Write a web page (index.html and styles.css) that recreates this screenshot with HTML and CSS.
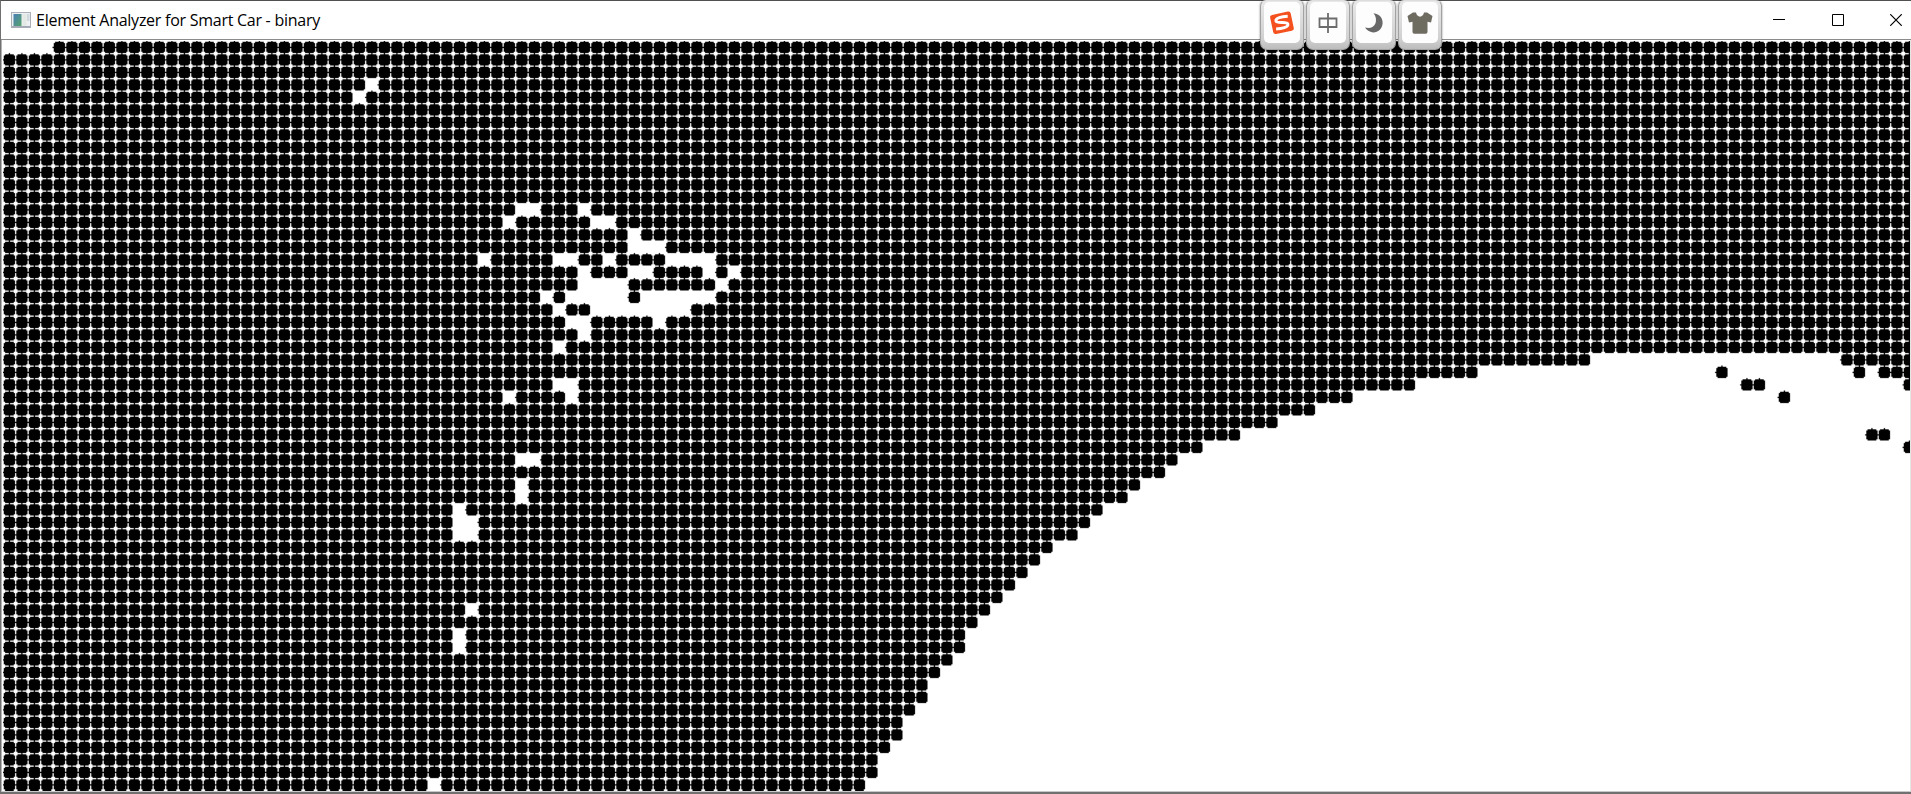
FILE: index.html
```
<!DOCTYPE html>
<html lang="en">
<head>
<meta charset="utf-8">
<title>Element Analyzer for Smart Car - binary</title>
<link rel="stylesheet" href="styles.css">
</head>
<body>
<main class="window">
  <header class="titlebar">
    <svg class="app-icon" width="20" height="16" viewBox="0 0 20 16">
      <defs><linearGradient id="pane" x1="0" y1="0" x2="1" y2="1"><stop offset="0" stop-color="#4a7fb5"/><stop offset="1" stop-color="#55a36c"/></linearGradient></defs>
      <rect x=".5" y=".5" width="19" height="15" fill="#eef1f3" stroke="#a9b0b8"/>
      <rect x="1" y="14" width="18" height="1.5" fill="#a3a9b6"/>
      <rect x="2.5" y="2" width="8" height="12" fill="url(#pane)"/>
      <rect x="11.5" y="2" width="4" height="12" fill="#e3e9e5"/>
      <rect x="16" y="2" width="2.5" height="7" fill="#d0d7dd"/>
    </svg>
    <h1 class="title">Element Analyzer for Smart Car - binary</h1>
    <div class="controls">
      <svg class="control" width="12" height="12" viewBox="0 0 12 12"><path d="M0 5.5H12"/></svg>
      <svg class="control" width="12" height="12" viewBox="0 0 12 12"><path d="M.5.5h11v11H.5z"/></svg>
      <svg class="control" width="12" height="12" viewBox="0 0 12 12"><path class="cross" d="M.2.2 11.8 11.8M11.8.2.2 11.8"/></svg>
    </div>
  </header>
  <canvas class="grid" id="grid" width="1908" height="751"></canvas>
</main>

<div class="ime">
  <span class="key"><span class="face">
    <svg width="26" height="26" viewBox="0 0 26 26">
      <g transform="rotate(-12 13 13)"><rect x="2.500" y="3" width="21" height="19.500" rx="2.500" fill="#f4511e"/>
      <path d="M20 7.500C14 6.600 7.500 6.700 7.500 9.800c0 3.200 11 2.200 11 5.500 0 3.300-7 3.300-12.500 2.300" fill="none" stroke="#fff" stroke-width="3"/></g>
    </svg></span></span>
  <span class="key"><span class="face">
    <svg width="20" height="22" viewBox="0 0 20 22"><path d="M1.500 6.500h17v8.500h-17zM10 1v20" fill="none" stroke="#6c6c6c" stroke-width="1.800"/></svg></span></span>
  <span class="key"><span class="face">
    <svg width="20" height="22" viewBox="0 0 20 22"><path d="M9.500 1.200C16 2 19 6.500 18.600 11.500 18 17 14 20.600 9 20.400 5.500 20.200 2.500 18.300 1 15.600c5 1.400 9-.3 10.500-4.300C12.600 8 12 4 9.500 1.200z" fill="#686868"/></svg></span></span>
  <span class="key"><span class="face">
    <svg width="28" height="24" viewBox="0 0 28 24"><path d="M7 1.500h3C10.800 7 17.200 7 18 1.500h3L26.500 5 25 11.500l-3.500-.7V21q0 1.800-1.800 1.800H8.300Q6.500 22.800 6.500 21V10.800L3 11.500 1.500 5z" fill="#6e6b60"/></svg></span></span>
</div>
<script src="grid.js"></script>
</body>
</html>
```
FILE: styles.css
```
* { box-sizing: border-box; }

body {
  margin: 0;
  overflow: hidden;
  background: #fff;
}

.window {
  display: flex;
  flex-direction: column;
  width: 1911px;
  height: 794px;
  background: #fff;
  border-top: 1px solid #505050;
  border-left: 1px solid #707070;
  border-bottom: 2px solid #707070;
}

.titlebar {
  display: flex;
  flex: none;
  align-items: center;
  height: 39px;
  padding: 0 9px 1px 10px;
  border-bottom: 1px solid #8c8c8c;
}

.app-icon { flex: none; }

.title {
  margin: 0 auto 0 5px;
  font: 400 16px/24px "Open Sans", "Noto Sans", sans-serif;
  letter-spacing: -0.26px;
  color: #000;
  white-space: nowrap;
}

.controls {
  display: flex;
  gap: 46.5px;
}

.control {
  fill: none;
  stroke: #000;
  stroke-width: 1;
}

.cross { stroke-width: 1.2; }

.grid {
  display: block;
  flex: none;
  width: 1910px;
  height: 752px;
  border-left: 1px solid #b4b4b4;
  border-right: 1px solid #e6e6e6;
  border-bottom: 1px solid #c8c8c8;
}

.ime {
  position: absolute;
  top: 0;
  left: 1260px;
  display: flex;
  gap: 2px;
}

.key {
  display: block;
  width: 44px;
  height: 50px;
  padding: 1px 3px 0;
  border-radius: 6px 6px 7px 7px;
  background: linear-gradient(#e8e8e8, #d0d0d0 80%, #bcbcbc);
  border: 1px solid #a2a2a2;
  border-top-color: #ddd;
  box-shadow: 0 0 2px rgba(0, 0, 0, 0.5);
}

.face {
  display: flex;
  align-items: center;
  justify-content: center;
  height: 41px;
  border-radius: 5px;
  background: #fdfdfd;
}
```
FILE: grid.js
```
// Binary image view: every dark pixel is a filled disc inside a 10x10 cell.
const COLS = 153, ROWS = 60, CELL = 10, SCALE = 1.25, OFFSET = 0.5;

// Last dark column for each row from 25 downwards.
const edge = [126, 117, 112, 107, 104, 101, 98, 95, 93, 92, 90, 89, 87, 86, 85, 83, 82, 81,
  80, 79, 78, 77, 76, 76, 75, 74, 73, 73, 72, 71, 71, 70, 69, 69, 68];

// Light column ranges inside the dark area.
const light = {
  0: [[0, 3]], 3: [[29, 29]], 4: [[28, 28]],
  13: [[41, 42], [46, 46]], 14: [[40, 40], [47, 48]],
  15: [[50, 50]], 16: [[50, 52]],
  17: [[38, 38], [44, 45], [48, 48], [53, 56]],
  18: [[46, 46], [50, 51], [56, 56], [58, 58]],
  19: [[46, 49], [57, 57]],
  20: [[43, 43], [45, 49], [51, 56]],
  21: [[44, 44], [47, 54]],
  22: [[45, 46], [52, 52]], 23: [[46, 46]], 24: [[44, 44]],
  27: [[44, 45]], 28: [[40, 40], [45, 45]],
  33: [[41, 42]], 35: [[41, 41]], 36: [[41, 41]],
  37: [[36, 36]], 38: [[36, 37]], 39: [[36, 37]],
  45: [[37, 37]], 47: [[36, 36]], 48: [[36, 36]], 59: [[34, 34]]
};

// Dark column ranges to the right of the edge.
const dark = {
  25: [[147, 152]], 26: [[137, 137], [148, 148], [150, 152]],
  27: [[139, 140], [152, 152]], 28: [[142, 142]],
  31: [[149, 150]], 32: [[152, 152]]
};

const within = (ranges, c) => (ranges || []).some(([a, b]) => c >= a && c <= b);
const isDark = (r, c) => {
  const last = r < 25 ? COLS : edge[r - 25];
  return c <= last ? !within(light[r], c) : within(dark[r], c);
};

const source = document.createElement('canvas');
source.width = COLS * CELL;
source.height = ROWS * CELL;
const s = source.getContext('2d');
s.fillStyle = '#fff';
s.fillRect(0, 0, source.width, source.height);
s.fillStyle = '#000';
for (let r = 0; r < ROWS; r++) {
  for (let c = 0; c < COLS; c++) {
    if (!isDark(r, c)) continue;
    for (let dy = -5; dy <= 4; dy++) {
      const half = Math.floor(Math.sqrt(25 - dy * dy));
      const left = Math.max(-5, -half), right = Math.min(4, half);
      s.fillRect(c * CELL + 5 + left, r * CELL + 5 + dy, right - left + 1, 1);
    }
  }
}

const view = document.getElementById('grid').getContext('2d');
view.fillStyle = '#fff';
view.fillRect(0, 0, 1908, 751);
view.imageSmoothingEnabled = true;
view.drawImage(source, OFFSET, OFFSET, source.width * SCALE, source.height * SCALE);
```
